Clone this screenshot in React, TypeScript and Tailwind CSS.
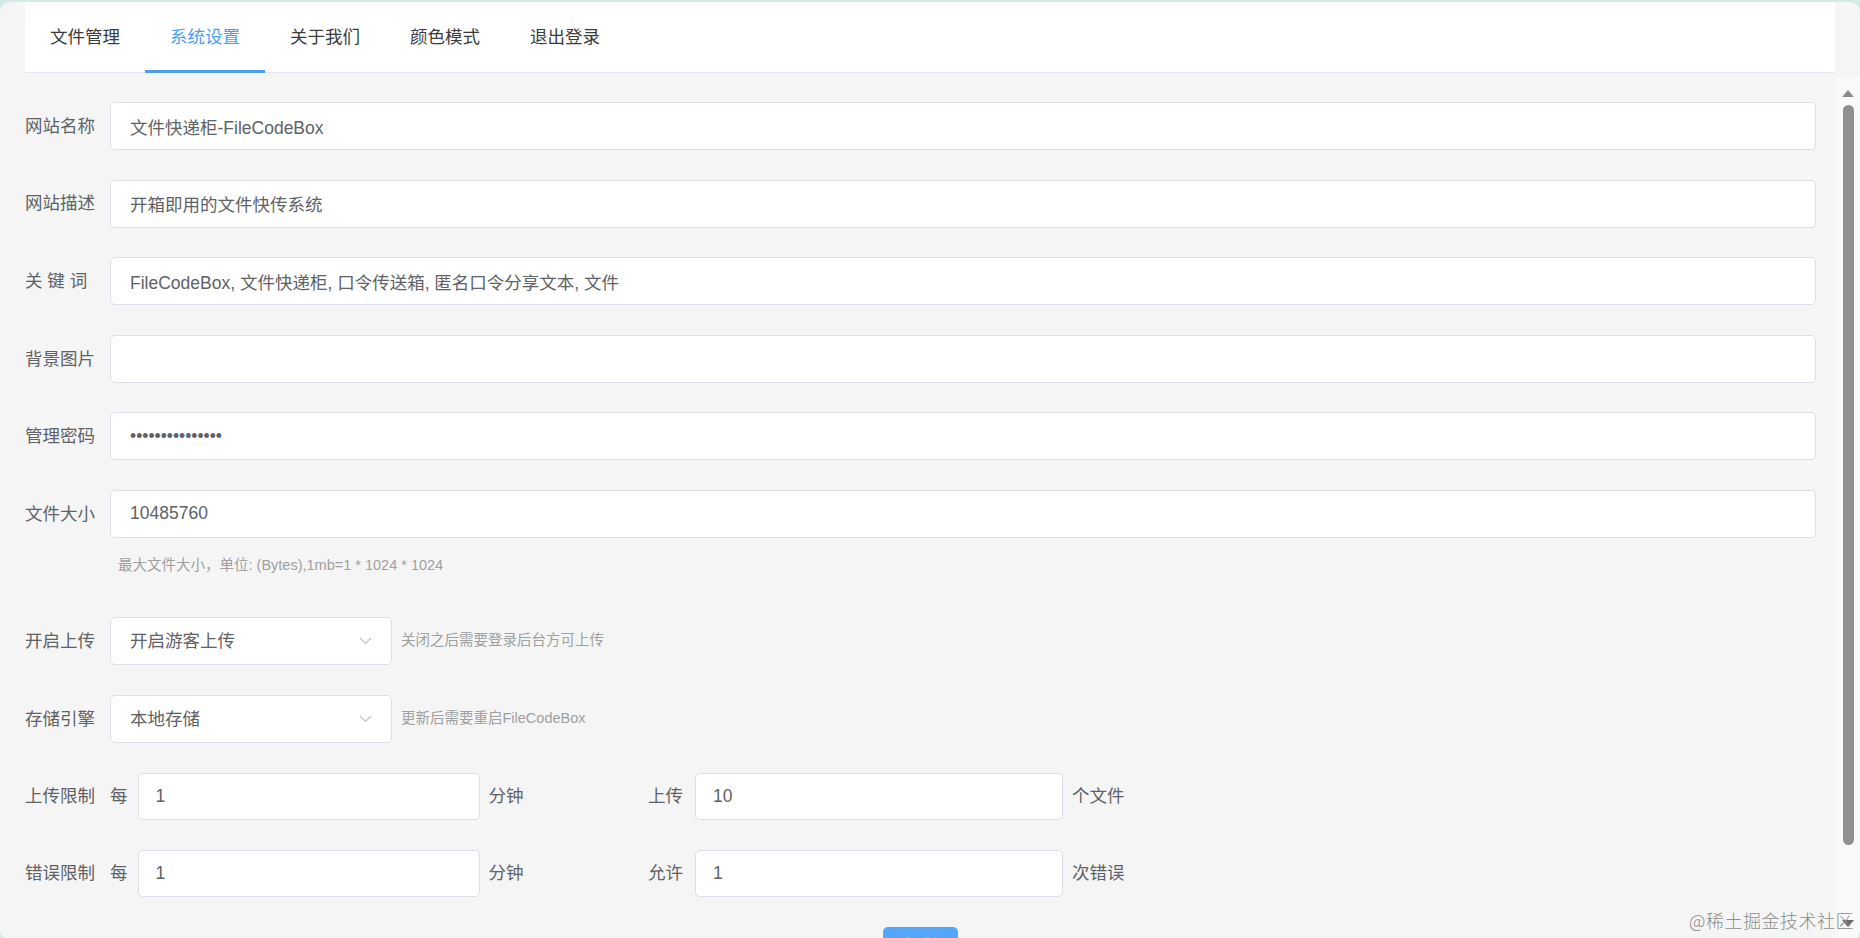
import React from "react";

const font = "font-['Liberation_Sans','Noto_Sans_CJK_SC',sans-serif]";

const tabs = ["文件管理", "系统设置", "关于我们", "颜色模式", "退出登录"];

type FieldProps = {
  label: string;
  value: string;
  password?: boolean;
};

const Field: React.FC<FieldProps> = ({ label, value, password }) => (
  <div className="flex items-center h-[48px]">
    <label className="w-[85px] shrink-0 text-[17.5px] text-[#606266] whitespace-pre">{label}</label>
    <input
      readOnly
      type={password ? "password" : "text"}
      value={value}
      className={`${font} flex-1 h-full bg-white border border-[#dcdfe6] rounded-[5px] px-[19px] text-[17.5px] text-[#606266] outline-none`}
    />
  </div>
);

const Select: React.FC<{ label: string; value: string; tip: string }> = ({ label, value, tip }) => (
  <div className="flex items-center h-[48px]">
    <label className="w-[85px] shrink-0 text-[17.5px] text-[#606266]">{label}</label>
    <div className="w-[282px] h-full bg-white border border-[#dcdfe6] rounded-[5px] pl-[19px] pr-[19px] flex items-center justify-between">
      <span className="text-[17.5px] text-[#606266]">{value}</span>
      <svg width="13" height="8" viewBox="0 0 13 8" fill="none">
        <path d="M1 1l5.5 5.5L12 1" stroke="#c0c4cc" strokeWidth="1.1" />
      </svg>
    </div>
    <span className="ml-[9px] text-[14.5px] text-[#a0a0a0]">{tip}</span>
  </div>
);

const LimitRow: React.FC<{ label: string; a: string; b: string; unitA: string; mid: string; unitB: string }> = ({
  label,
  a,
  b,
  unitA,
  mid,
  unitB,
}) => (
  <div className="flex items-center h-[47px]">
    <label className="w-[85px] shrink-0 text-[17.5px] text-[#606266]">{label}</label>
    <div className="w-[538px] flex items-center h-full">
      <span className="text-[17.5px] text-[#606266]">每</span>
      <input
        readOnly
        value={a}
        className={`${font} ml-[10px] w-[342px] h-full bg-white border border-[#dcdfe6] rounded-[5px] px-[17px] text-[17.5px] text-[#606266] outline-none`}
      />
      <span className="ml-[9px] text-[17.5px] text-[#606266]">{unitA}</span>
    </div>
    <div className="flex items-center h-full">
      <span className="text-[17.5px] text-[#606266]">{mid}</span>
      <input
        readOnly
        value={b}
        className={`${font} ml-[12px] w-[368px] h-full bg-white border border-[#dcdfe6] rounded-[5px] px-[17px] text-[17.5px] text-[#606266] outline-none`}
      />
      <span className="ml-[9px] text-[17.5px] text-[#606266]">{unitB}</span>
    </div>
  </div>
);

export default function App() {
  return (
    <div className={`${font} w-full h-[938px] bg-[#d3ebe6] overflow-hidden`}>
      <div className="relative h-full mt-[2px] rounded-[10px] bg-[#f5f5f5] flex overflow-hidden">
        {/* main column */}
        <div className="flex-1 pl-[25px]">
          {/* tabs */}
          <div className="h-[71px] bg-white border-b border-[#e4e7ed] flex">
            {tabs.map((t, i) => (
              <div
                key={t}
                className={`relative w-[120px] flex items-center justify-center text-[17.5px] ${
                  i === 1 ? "text-[#4a9ff5]" : "text-[#3a3b3d]"
                }`}
              >
                {t}
                {i === 1 && <div className="absolute left-0 right-0 bottom-[-1px] h-[3px] bg-[#4a9ff5]" />}
              </div>
            ))}
          </div>

          {/* form */}
          <div className="pr-[19px] pt-[29px]">
            <div className="flex flex-col gap-[29.6px]">
              <Field label="网站名称" value="文件快递柜-FileCodeBox" />
              <Field label="网站描述" value="开箱即用的文件快传系统" />
              <Field label="关 键 词" value="FileCodeBox, 文件快递柜, 口令传送箱, 匿名口令分享文本, 文件" />
              <Field label="背景图片" value="" />
              <Field label="管理密码" value="123456789012345" password />
              <Field label="文件大小" value="10485760" />
            </div>
            <div className="mt-[17px] h-[20px] pl-[93px] text-[14.5px] leading-[20px] text-[#a0a0a0]">
              最大文件大小，单位: (Bytes),1mb=1 * 1024 * 1024
            </div>
            <div className="mt-[42px] flex flex-col gap-[30px]">
              <Select label="开启上传" value="开启游客上传" tip="关闭之后需要登录后台方可上传" />
              <Select label="存储引擎" value="本地存储" tip="更新后需要重启FileCodeBox" />
              <LimitRow label="上传限制" a="1" b="10" unitA="分钟" mid="上传" unitB="个文件" />
              <LimitRow label="错误限制" a="1" b="1" unitA="分钟" mid="允许" unitB="次错误" />
            </div>
            <div className="mt-[30px] flex justify-center">
              <button className="w-[75px] h-[38px] rounded-[5px] bg-[#55a6f8] text-white text-[17.5px]">保存</button>
            </div>
          </div>
        </div>

        {/* scrollbar */}
        <div className="w-[25px] shrink-0 flex flex-col">
          <div className="h-[75px]" />
          <div className="flex-1 bg-[#f9f9f9] flex flex-col items-center pl-[1px]">
            <svg className="mt-[13px]" width="12" height="7" viewBox="0 0 12 7">
              <path d="M0 7L6 0l6 7z" fill="#8a8a8a" />
            </svg>
            <div className="mt-[8px] w-[11px] h-[740px] rounded-full bg-[#8f8f8f]" />
            <svg className="mt-[75px]" width="12" height="7" viewBox="0 0 12 7">
              <path d="M0 0h12L6 7z" fill="#6a6a6a" />
            </svg>
          </div>
        </div>

        <div className="absolute right-[6px] bottom-[6px] text-[18px] text-[#8c8c8c] tracking-[0.5px] font-['Noto_Sans_CJK_SC',serif] font-light">
          @稀土掘金技术社区
        </div>
      </div>
    </div>
  );
}
